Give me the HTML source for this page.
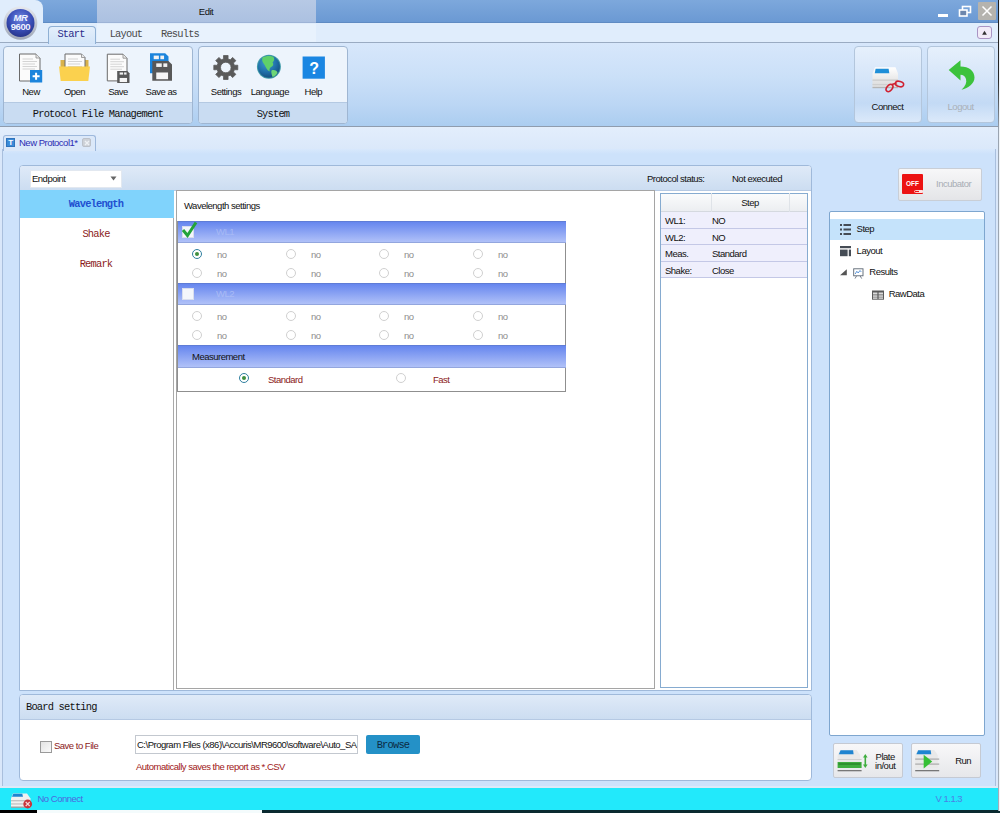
<!DOCTYPE html>
<html><head><meta charset="utf-8"><title>MR9600</title>
<style>
*{box-sizing:border-box;margin:0;padding:0}
html,body{width:1000px;height:813px;overflow:hidden;background:#d9e7fa}
body{position:relative;font-family:"Liberation Sans",sans-serif;font-size:9.5px;color:#111;letter-spacing:-0.5px}
.a{position:absolute}
.mono{font-family:"Liberation Mono",monospace;font-size:10.4px;letter-spacing:-0.8px}
.t{position:absolute;white-space:nowrap;line-height:12px;height:12px}
.c{transform:translateX(-50%)}
#title{left:0;top:0;width:1000px;height:23px;background:linear-gradient(#7da8dc,#6b99d3);border-bottom:1px solid #5f8bc3}
#titlemid{left:97px;top:0;width:219px;height:23px;background:linear-gradient(#b7c9e5,#acc1e1);border-bottom:1px solid #9db3d6}
#tabrow{left:0;top:23px;width:1000px;height:20px;background:#e0edfc;border-bottom:1px solid #9aabc2}
#appcorner{left:0;top:0;width:43px;height:42px;background:#e0edfc;border-top-right-radius:8px}
#ribbon{left:0;top:43px;width:1000px;height:83.5px;background:linear-gradient(#d7e7fb 0%,#cbe0f8 40%,#bbd6f4 75%,#abcdf0 100%);border-bottom:1px solid #8f9cae}
#below{left:0;top:126.5px;width:1000px;height:23px;background:linear-gradient(#e3eefc,#dae8fa)}
#doc{left:2px;top:148.5px;width:994px;height:638.5px;background:linear-gradient(#d8e8fc 0,#cde2fb 5px,#cde2fb 100%);border:1px solid #a9bfdd;border-top:none}
.grp{border:1px solid #9fb6d2;border-radius:4px;background:#edf4fc;overflow:hidden}
.grp .cap{position:absolute;left:0;right:0;bottom:0;height:21px;background:#c9dcf2;border-top:1px solid #b4c9e2;text-align:center;line-height:22px}
.bigbtn{border:1px solid #b3c6dc;border-radius:4px;background:linear-gradient(#e6f0fc 0%,#d2e3f8 50%,#c3daf5 75%,#dbe9fa 100%)}

.panel{border:1px solid #9fb9da;border-radius:4px 4px 0 0;background:#fff;overflow:hidden}
.phead{position:absolute;left:0;right:0;top:0;background:linear-gradient(#dfeaf8,#ccddf1);border-bottom:1px solid #b5c9e3}
.hdr{position:absolute;left:0;width:388px;background:linear-gradient(#6686ee,#b0c1f8);border-top:1px solid #5f7cd6;border-bottom:1px solid #93a6de}
.rad{position:absolute;width:10px;height:10px;border-radius:50%;border:1px solid #d0d0d0;background:#fff}
.rad.on{border-color:#2f7f9f}
.rad.on:after{content:"";position:absolute;left:2px;top:2px;width:4px;height:4px;border-radius:50%;background:#3f8f3f}
.no{color:#8e8e8e}
.grow{position:absolute;left:0;width:146px;height:17px;background:#efeffc;border-bottom:1px solid #c4c8e6}
</style></head><body>
<div class="a" id="title"></div>
<div class="a" id="titlemid"></div>
<div class="a" id="tabrow"></div>
<div class="a" id="appcorner"></div><div class="a" style="left:97px;top:24px;width:219px;height:18px;background:rgba(255,255,255,0.28)"></div>
<div class="a" id="ribbon"></div>
<div class="a" id="below"></div>
<div class="a" id="doc"></div>
<!-- title -->
<div class="t c" style="left:206px;top:6px;color:#111">Edit</div>
<!-- window controls -->
<div class="a" style="left:938.2px;top:14.4px;width:9.8px;height:2.3px;background:#fff"></div>
<svg class="a" style="left:958px;top:5px" width="14" height="13" viewBox="0 0 14 13"><rect x="4.5" y="1.5" width="8" height="6" fill="none" stroke="#fff" stroke-width="1.6"/><rect x="1.5" y="5" width="7.5" height="6" fill="#6d87ad" stroke="#fff" stroke-width="1.6"/></svg>
<div class="a" style="left:978px;top:2px;width:18px;height:18px;background:#b5b3ae;border-radius:1px"></div>
<svg class="a" style="left:978px;top:2px" width="18" height="18" viewBox="0 0 18 18"><path d="M4.5 4.5 L13.5 13.5 M13.5 4.5 L4.5 13.5" stroke="#fff" stroke-width="1.5" fill="none"/></svg>
<div class="a" style="left:977px;top:26px;width:15px;height:13px;border:1px solid #a994c4;border-radius:3px;background:#f1ebf8"></div>
<svg class="a" style="left:977px;top:26px" width="15" height="13"><path d="M7.5 4.8 L9.9 8.8 L5.1 8.8 Z" fill="#333"/></svg>
<!-- app button -->
<svg class="a" style="left:1px;top:3px" width="40" height="40" viewBox="0 0 40 40">
<defs><radialGradient id="g1" cx="50%" cy="35%" r="65%"><stop offset="0" stop-color="#6f86e0"/><stop offset="0.6" stop-color="#3a4fb8"/><stop offset="1" stop-color="#27358c"/></radialGradient>
<linearGradient id="g0" x1="0" y1="0" x2="0" y2="1"><stop offset="0" stop-color="#e6e9ef"/><stop offset="1" stop-color="#9ea6b6"/></linearGradient></defs>
<circle cx="19.5" cy="20" r="16.8" fill="url(#g0)"/><circle cx="19.5" cy="20" r="14" fill="url(#g1)"/>
<text x="19.5" y="17.5" text-anchor="middle" font-family="Liberation Sans, sans-serif" font-size="9.5" font-weight="bold" font-style="italic" fill="#eef2ff">MR</text>
<text x="19.5" y="27" text-anchor="middle" font-family="Liberation Sans, sans-serif" font-size="9.5" font-weight="bold" fill="#eef2ff" letter-spacing="-0.4">9600</text>
</svg>
<!-- ribbon tabs -->
<div class="a" style="left:48px;top:26px;width:48px;height:18px;border:1px solid #8fb0d4;border-bottom:none;border-radius:4px 4px 0 0;background:linear-gradient(#e4effb,#d2e4f8)"></div>
<div class="t mono c" style="left:71px;top:28px;color:#2a2a8a">Start</div>
<div class="t mono c" style="left:126px;top:28px;color:#4a4a4a">Layout</div>
<div class="t mono c" style="left:180px;top:28px;color:#4a4a4a">Results</div>
<!-- group 1 -->
<div class="a grp" style="left:3px;top:46px;width:190px;height:78px"><div class="cap mono">Protocol File Management</div></div>
<div class="a grp" style="left:198px;top:46px;width:150px;height:78px"><div class="cap mono">System</div></div>
<div class="t c" style="left:31px;top:85.7px">New</div>
<div class="t c" style="left:74.5px;top:85.7px">Open</div>
<div class="t c" style="left:118px;top:85.7px">Save</div>
<div class="t c" style="left:161px;top:85.7px">Save as</div>
<div class="t c" style="left:226px;top:85.7px">Settings</div>
<div class="t c" style="left:269.8px;top:85.7px">Language</div>
<div class="t c" style="left:313.3px;top:85.7px">Help</div>
<!-- icons placeholder -->
<svg class="a" style="left:0;top:44px" width="360" height="60" viewBox="0 44 360 60"><path d="M19.5 54 L36.0 54 L40.0 58 L40.0 81 L19.5 81 Z" fill="#fbfbfb" stroke="#6a6a6a" stroke-width="1"/><path d="M36.0 54 L36.0 58 L40.0 58" fill="#e9e9e9" stroke="#8a8a8a" stroke-width="0.8"/><rect x="22.5" y="58.5" width="10.5" height="1" fill="#d4d4d4"/><rect x="22.5" y="61" width="14.5" height="1" fill="#d4d4d4"/><rect x="22.5" y="63.5" width="12.5" height="1" fill="#d4d4d4"/><rect x="22.5" y="66" width="14.5" height="1" fill="#d4d4d4"/><rect x="22.5" y="68.5" width="12.5" height="1" fill="#d4d4d4"/><rect x="30" y="70" width="12.2" height="12.5" fill="#1b84dc"/><path d="M36.1 72.8 V79.8 M32.6 76.3 H39.6" stroke="#fff" stroke-width="2"/><path d="M60.5 60 H66 V67 H60.5 Z M84 60 H88.5 V67 H84 Z" fill="#d9b24a"/><path d="M65 54 L81.5 54 L85 57.5 L85 70 L65 70 Z" fill="#fbfbfb" stroke="#6a6a6a" stroke-width="1"/><path d="M81.5 54 L81.5 57.5 L85 57.5" fill="#e9e9e9" stroke="#8a8a8a" stroke-width="0.8"/><rect x="68" y="58.5" width="10" height="1" fill="#d4d4d4"/><rect x="68" y="61" width="14" height="1" fill="#d4d4d4"/><rect x="68" y="63.5" width="12" height="1" fill="#d4d4d4"/><rect x="68" y="66" width="14" height="1" fill="#d4d4d4"/><rect x="68" y="68.5" width="12" height="1" fill="#d4d4d4"/><path d="M59 66.5 H90 L88.3 81 H60.7 Z" fill="#fbd14e"/><path d="M107.3 54.2 L123.0 54.2 L127.0 58.2 L127.0 80.9 L107.3 80.9 Z" fill="#fbfbfb" stroke="#6a6a6a" stroke-width="1"/><path d="M123.0 54.2 L123.0 58.2 L127.0 58.2" fill="#e9e9e9" stroke="#8a8a8a" stroke-width="0.8"/><rect x="110.3" y="58.7" width="9.7" height="1" fill="#d4d4d4"/><rect x="110.3" y="61.2" width="13.7" height="1" fill="#d4d4d4"/><rect x="110.3" y="63.7" width="11.7" height="1" fill="#d4d4d4"/><rect x="110.3" y="66.2" width="13.7" height="1" fill="#d4d4d4"/><rect x="110.3" y="68.7" width="11.7" height="1" fill="#d4d4d4"/><path d="M117.2 71 L127.286 71 L129.5 73.214 L129.5 83 L117.2 83 Z" fill="#585858"/><rect x="119.66" y="72.44" width="3.4440000000000004" height="2.16" fill="#f2f2f2"/><rect x="124.08800000000001" y="72.44" width="2.4600000000000004" height="2.16" fill="#f2f2f2"/><rect x="119.66" y="77.96" width="7.38" height="4.08" fill="#f5f5f5"/><path d="M150 53.2 L165.17 53.2 L168.5 56.53 L168.5 73.2 L150 73.2 Z" fill="#1b84dc"/><rect x="153.7" y="55.6" width="5.180000000000001" height="3.5999999999999996" fill="#f2f2f2"/><rect x="160.36" y="55.6" width="3.7" height="3.5999999999999996" fill="#f2f2f2"/><rect x="153.7" y="64.8" width="11.1" height="6.800000000000001" fill="#f5f5f5"/><path d="M152.3 61 L168.454 61 L172.0 64.546 L172.0 80.8 L152.3 80.8 Z" fill="#585858"/><rect x="156.24" y="63.376" width="5.516" height="3.564" fill="#f2f2f2"/><rect x="163.33200000000002" y="63.376" width="3.94" height="3.564" fill="#f2f2f2"/><rect x="156.24" y="72.484" width="11.819999999999999" height="6.732000000000001" fill="#f5f5f5"/><path d="M223.60 58.88 L223.50 55.52 L228.10 55.52 L228.00 58.88 L230.34 59.85 L232.64 57.40 L235.90 60.66 L233.45 62.96 L234.42 65.30 L237.78 65.20 L237.78 69.80 L234.42 69.70 L233.45 72.04 L235.90 74.34 L232.64 77.60 L230.34 75.15 L228.00 76.12 L228.10 79.48 L223.50 79.48 L223.60 76.12 L221.26 75.15 L218.96 77.60 L215.70 74.34 L218.15 72.04 L217.18 69.70 L213.82 69.80 L213.82 65.20 L217.18 65.30 L218.15 62.96 L215.70 60.66 L218.96 57.40 L221.26 59.85 Z M220.5 67.5 a5.3 5.3 0 1 0 10.6 0 a5.3 5.3 0 1 0 -10.6 0 Z" fill="#5a5a5a" fill-rule="evenodd" stroke="#5a5a5a" stroke-width="0.8" stroke-linejoin="round"/><defs><radialGradient id="gl" cx="40%" cy="30%" r="75%"><stop offset="0" stop-color="#3f9fd0"/><stop offset="0.6" stop-color="#1f6fa8"/><stop offset="1" stop-color="#154a78"/></radialGradient></defs><circle cx="268.9" cy="66.8" r="12" fill="#3f9aa8"/><circle cx="268.9" cy="66.8" r="11" fill="url(#gl)"/><path d="M262.5 57.5 C266 55.5 271 55.5 273.5 57 C275 59 274 61 272.5 62.5 C274 64 273 66.5 271 67 C269.5 68 269 70 270 71.5 L268 70.5 C266 68 265 65.5 264 64 C262.5 62 261.5 60 262.5 57.5 Z" fill="#5fd06a"/><path d="M271.5 70.5 C274 69.5 277 70.5 277.5 72.5 C276.5 75 274.5 76.5 272.5 77 C272 75 270.8 72.5 271.5 70.5 Z" fill="#6ed676"/><rect x="302.6" y="56.5" width="22.3" height="22.2" fill="#1a86e2"/><text x="313.8" y="73.5" text-anchor="middle" font-family="Liberation Sans, sans-serif" font-weight="bold" font-size="16" fill="#fff">?</text></svg>
<!-- connect / logout -->
<div class="a bigbtn" style="left:854px;top:45.5px;width:68px;height:77.5px"></div>
<div class="a bigbtn" style="left:927.3px;top:45.5px;width:68px;height:77.5px"></div>
<div class="t c" style="left:887.5px;top:100.7px">Connect</div>
<div class="t c" style="left:960.6px;top:100.7px;color:#a9b0b8">Logout</div>
<svg class="a" style="left:860px;top:50px" width="130" height="50" viewBox="860 50 130 50"><defs><linearGradient id="dv" x1="0" y1="0" x2="0" y2="1"><stop offset="0" stop-color="#ffffff"/><stop offset="1" stop-color="#d8d8d8"/></linearGradient></defs><path d="M875 67.3 H895.5 L898 73.5 V88 H872.5 V73.5 Z" fill="url(#dv)"/><rect x="872.5" y="79.5" width="25.5" height="1.2" fill="#c9c9c9"/><rect x="872.5" y="84" width="25.5" height="1" fill="#cfcfcf"/><rect x="872.5" y="87" width="25.5" height="1.2" fill="#b5b5b5"/><path d="M875.6 68.8 H888.6 L889.3 73.3 H874.8 Z" fill="#1f8fd8"/><g fill="none" stroke="#d02030" stroke-width="1.6"><ellipse cx="889.5" cy="88" rx="4.2" ry="2.6" transform="rotate(-50 889.5 88)"/><ellipse cx="899.5" cy="84" rx="4.2" ry="2.6" transform="rotate(15 899.5 84)"/><path d="M892 84.5 L896.5 83"/></g><path d="M948.7 70 L960.5 60.2 L960.5 66.5 C969 66.5 974.5 71 974.5 77.5 C974.5 83.5 968.5 88 961.5 89.8 C965.5 86 967 82.5 966 79 C965 76 963 74.8 960.5 74.8 L960.5 80.5 Z" fill="#3cc23c"/></svg>
<!-- doc tab -->
<div class="a" style="left:3px;top:135px;width:93px;height:16px;border:1px solid #9db8dc;border-bottom:none;border-radius:3px 3px 0 0;background:#dbe8f9"></div>
<div class="a" style="left:6px;top:138px;width:9px;height:9px;background:#3b8bd8;border:1px solid #2f73bb"></div>
<div class="t" style="left:8.2px;top:136.5px;color:#fff;font-size:8px;font-weight:bold;letter-spacing:0">T</div>
<div class="t" style="left:19px;top:137px;color:#2d2db4">New Protocol1*</div>
<div class="a" style="left:82px;top:138px;width:9px;height:9px;background:#cdd1d7;border:1px solid #bcc1c9;border-radius:2px"></div>
<svg class="a" style="left:81.5px;top:137.5px" width="10" height="10"><path d="M3 3 L7 7 M7 3 L3 7" stroke="#eef1f5" stroke-width="1.4"/></svg>

<!-- main panel -->
<div class="a panel" style="left:19px;top:165px;width:793px;height:526px;background:#fff"><div class="phead" style="height:25px"></div></div>
<div class="a" style="left:30px;top:170px;width:92px;height:18px;background:#fff;border:1px solid #e2e8f0"></div>
<div class="t" style="left:32px;top:173px">Endpoint</div>
<svg class="a" style="left:110px;top:176px" width="7" height="5"><path d="M0.5 0.5 L6.5 0.5 L3.5 4.5 Z" fill="#666"/></svg>
<div class="t" style="left:647px;top:172.5px">Protocol status:</div>
<div class="t" style="left:732px;top:172.5px">Not executed</div>
<!-- left list -->
<div class="a" style="left:20px;top:190px;width:154px;height:500px;background:#fff;border-right:1px solid #a9a9a9"></div>
<div class="a" style="left:20px;top:190px;width:154px;height:28px;background:#80d3fc"></div>
<div class="t mono c" style="left:96px;top:198px;color:#1f4fd0;font-weight:bold">Wavelength</div>
<div class="t mono c" style="left:96px;top:227.5px;color:#8b1a1a">Shake</div>
<div class="t mono c" style="left:96px;top:257.5px;color:#8b1a1a">Remark</div>
<!-- center -->
<div class="a" style="left:176px;top:190px;width:479px;height:499px;background:#fff;border:1px solid #a5a5a5"></div>
<div class="t" style="left:184px;top:200px">Wavelength settings</div>
<div class="a" style="left:177px;top:220.5px;width:389px;height:171px;border:1px solid #8f8f8f;border-top:none;background:#fff">
 <div class="hdr" style="top:0;height:22px"></div>
 <div class="hdr" style="top:62px;height:22px"></div>
 <div class="hdr" style="top:124px;height:23px"></div>
</div>
<div class="t" style="left:216px;top:226px;color:#a6b9f5">WL1</div>
<div class="t" style="left:216px;top:288px;color:#a9bbf5">WL2</div>
<div class="t" style="left:192px;top:351px;color:#111">Measurement</div>
<!-- checkboxes -->
<div class="a" style="left:182px;top:226px;width:12px;height:12px;background:#f4f6fb;border:1px solid #d9deee"></div>
<svg class="a" style="left:181px;top:220px" width="18" height="18" viewBox="0 0 18 18"><path d="M2 10 L6.5 15.5 L15 2.5" fill="none" stroke="#22a33a" stroke-width="3"/></svg>
<div class="a" style="left:182px;top:288px;width:12px;height:12px;background:#f4f6fb;border:1px solid #d9deee"></div>
<div class="rad on" style="left:192px;top:249px"></div><div class="t no" style="left:217px;top:249.4px">no</div>
<div class="rad" style="left:286px;top:249px"></div><div class="t no" style="left:311px;top:249.4px">no</div>
<div class="rad" style="left:379px;top:249px"></div><div class="t no" style="left:404px;top:249.4px">no</div>
<div class="rad" style="left:473px;top:249px"></div><div class="t no" style="left:498px;top:249.4px">no</div>
<div class="rad" style="left:192px;top:268px"></div><div class="t no" style="left:217px;top:268.4px">no</div>
<div class="rad" style="left:286px;top:268px"></div><div class="t no" style="left:311px;top:268.4px">no</div>
<div class="rad" style="left:379px;top:268px"></div><div class="t no" style="left:404px;top:268.4px">no</div>
<div class="rad" style="left:473px;top:268px"></div><div class="t no" style="left:498px;top:268.4px">no</div>
<div class="rad" style="left:192px;top:311px"></div><div class="t no" style="left:217px;top:311.4px">no</div>
<div class="rad" style="left:286px;top:311px"></div><div class="t no" style="left:311px;top:311.4px">no</div>
<div class="rad" style="left:379px;top:311px"></div><div class="t no" style="left:404px;top:311.4px">no</div>
<div class="rad" style="left:473px;top:311px"></div><div class="t no" style="left:498px;top:311.4px">no</div>
<div class="rad" style="left:192px;top:330px"></div><div class="t no" style="left:217px;top:330.4px">no</div>
<div class="rad" style="left:286px;top:330px"></div><div class="t no" style="left:311px;top:330.4px">no</div>
<div class="rad" style="left:379px;top:330px"></div><div class="t no" style="left:404px;top:330.4px">no</div>
<div class="rad" style="left:473px;top:330px"></div><div class="t no" style="left:498px;top:330.4px">no</div>
<div class="rad on" style="left:239px;top:373px"></div><div class="t" style="left:268px;top:373.5px;color:#8b1a1a">Standard</div>
<div class="rad" style="left:396px;top:373px"></div><div class="t" style="left:433px;top:373.5px;color:#8b1a1a">Fast</div>

<!-- step grid -->
<div class="a" style="left:660px;top:192.5px;width:148px;height:495px;background:#fff;border:1px solid #86abd0"></div>
<div class="a" style="left:661px;top:193.5px;width:146px;height:18.5px;background:linear-gradient(#fafbfc,#eceef1);border-bottom:1px solid #d5d9df"></div>
<div class="a" style="left:711px;top:193px;width:1px;height:19px;background:#dfe3e8"></div>
<div class="a" style="left:789px;top:193px;width:1px;height:19px;background:#dfe3e8"></div>
<div class="t c" style="left:750px;top:197px">Step</div>
<div class="a" style="left:661px;top:212px;width:146px;height:67px">
 <div class="grow" style="top:0"></div><div class="grow" style="top:17px;height:16px"></div><div class="grow" style="top:33px;height:17px"></div><div class="grow" style="top:50px;height:16px"></div>
</div>
<div class="t" style="left:665px;top:215px">WL1:</div><div class="t" style="left:712px;top:215px">NO</div>
<div class="t" style="left:665px;top:231.5px">WL2:</div><div class="t" style="left:712px;top:231.5px">NO</div>
<div class="t" style="left:665px;top:248px">Meas.</div><div class="t" style="left:712px;top:248px">Standard</div>
<div class="t" style="left:665px;top:264.5px">Shake:</div><div class="t" style="left:712px;top:264.5px">Close</div>
<!-- board setting -->
<div class="a panel" style="left:19px;top:694px;width:793px;height:87px;border-radius:4px"><div class="phead" style="height:25px"></div></div>
<div class="t mono" style="left:26px;top:701px;color:#111">Board setting</div>
<div class="a" style="left:40px;top:741px;width:12px;height:12px;background:linear-gradient(135deg,#e3e3e3,#fafafa);border:1px solid #9a9a9a"></div>
<div class="t" style="left:54px;top:739.7px;color:#8b1a1a">Save to File</div>
<div class="a" style="left:135px;top:735px;width:223px;height:19px;background:#fff;border:1px solid #c3c8cf"></div>
<div class="t" style="left:137px;top:738.7px;letter-spacing:-0.5px;width:220px;overflow:hidden">C:\Program Files (x86)\Accuris\MR9600\software\Auto_SA</div>
<div class="a" style="left:366px;top:735px;width:54px;height:19px;background:#2491c7;border-radius:2px"></div>
<div class="t mono c" style="left:393px;top:738.5px;color:#0b2a44">Browse</div>
<div class="t" style="left:136px;top:760.7px;color:#a01818">Automatically saves the report as *.CSV</div>
<!-- right column -->
<div class="a" style="left:897.5px;top:168px;width:84px;height:32.5px;border:1px solid #c9ced6;border-radius:2px;background:linear-gradient(#f7f7f8,#e4e5e8)"></div>
<div class="a" style="left:902px;top:174px;width:21px;height:20px;background:#ec1212;border-radius:1px"></div>
<div class="t c" style="left:912.5px;top:178px;color:#fff;font-size:6.5px;font-weight:bold;letter-spacing:0">OFF</div>
<div class="a" style="left:913.5px;top:189.5px;width:9px;height:3.6px;border:0.8px solid #fbd0d0;border-radius:2px"></div><div class="a" style="left:918.5px;top:189.5px;width:4px;height:3.6px;background:#fde4e4;border-radius:1px"></div>
<div class="t" style="left:936px;top:178px;color:#a8adb5">Incubator</div>
<div class="a" style="left:828.5px;top:210.5px;width:156.5px;height:525px;background:#fff;border:1px solid #7ea6cf;border-radius:2px"></div>
<div class="a" style="left:830px;top:219px;width:154px;height:21px;background:#c5e3fb"></div>
<div class="t" style="left:856.6px;top:222.9px">Step</div>
<div class="t" style="left:856.6px;top:244.7px">Layout</div>
<div class="t" style="left:869.3px;top:266.3px">Results</div>
<div class="t" style="left:888.7px;top:288.1px">RawData</div>
<svg class="a" style="left:835px;top:215px" width="60" height="90" viewBox="835 215 60 90"><rect x="840" y="224" width="2" height="2" fill="#454c55"/><rect x="843.5" y="224" width="7.5" height="2" fill="#454c55"/><rect x="840" y="228.5" width="2" height="2" fill="#454c55"/><rect x="843.5" y="228.5" width="7.5" height="2" fill="#454c55"/><rect x="840" y="233" width="2" height="2" fill="#454c55"/><rect x="843.5" y="233" width="7.5" height="2" fill="#454c55"/><rect x="840" y="246" width="11" height="2.2" fill="#454c55"/><rect x="840" y="249.6" width="7.6" height="6.6" fill="#454c55"/><rect x="848.8" y="249.6" width="2.2" height="6.6" fill="#454c55"/><path d="M846.8 269.2 V275.3 H840 Z" fill="#555"/><rect x="853.7" y="268.8" width="9.3" height="7" fill="#fff" stroke="#5a6572" stroke-width="0.9"/><path d="M855.2 274 L856.8 271.3 L858.2 273 L860 270.5 L861.3 272" fill="none" stroke="#3a7fd0" stroke-width="0.8"/><path d="M856.5 276 L855 278.6 M860.2 276 L861.7 278.6" stroke="#5a6572" stroke-width="0.8"/><rect x="872" y="290.5" width="12" height="9.2" fill="#5b5b5b"/><rect x="873" y="292.5" width="4.4" height="2" fill="#dcdcdc"/><rect x="878.6" y="292.5" width="4.4" height="2" fill="#dcdcdc"/><rect x="873" y="295.3" width="4.4" height="1.5" fill="#dcdcdc"/><rect x="878.6" y="295.3" width="4.4" height="1.5" fill="#dcdcdc"/><rect x="873" y="297.4" width="4.4" height="1.4" fill="#dcdcdc"/><rect x="878.6" y="297.4" width="4.4" height="1.4" fill="#dcdcdc"/></svg>
<div class="a" style="left:833px;top:743px;width:70px;height:35px;border:1px solid #c5cad3;border-radius:2px;background:linear-gradient(#f8f8f9,#e6e7ea)"></div>
<div class="a" style="left:911px;top:743px;width:70px;height:35px;border:1px solid #c5cad3;border-radius:2px;background:linear-gradient(#f8f8f9,#e6e7ea)"></div>
<div class="t c" style="left:885.2px;top:750.8px">Plate</div>
<div class="t c" style="left:885.2px;top:760.4px">in/out</div>
<div class="t c" style="left:963.2px;top:755.1px">Run</div>
<svg class="a" style="left:835px;top:746px" width="110" height="30" viewBox="835 746 110 30"><path d="M840.1 750 H856.6 L860.1 755 V768 H837.6 V755 Z" fill="#e9e9e9"/><path d="M840.6 750.3 H853.1 L853.6 754.3 H838.8000000000001 Z" fill="#1f84d0"/><rect x="837.6" y="770" width="24" height="1.3" fill="#777"/><rect x="837.6" y="759" width="24" height="1" fill="#cfcfcf"/><rect x="837.6" y="762" width="24" height="6" fill="#3fae3f"/><rect x="838.5" y="763.2" width="22" height="1.6" fill="#2c8a2c"/><path d="M865.3 754 L867.6 757.5 H866.1 V764.5 H867.6 L865.3 768 L863 764.5 H864.5 V757.5 H863 Z" fill="#3fae3f"/><path d="M917.7 750 H934.2 L937.7 755 V768 H915.2 V755 Z" fill="#e9e9e9"/><path d="M918.2 750.3 H930.7 L931.2 754.3 H916.4000000000001 Z" fill="#1f84d0"/><rect x="915.2" y="770" width="24" height="1.3" fill="#777"/><rect x="915.2" y="758.5" width="24" height="1.2" fill="#aaa"/><rect x="915.2" y="763.5" width="24" height="1.2" fill="#aaa"/><path d="M923.7 754.8 L932.2 761.6 L923.7 768.4 Z" fill="#35c035"/></svg>
<!-- status bar -->
<div class="a" style="left:0;top:786px;width:1000px;height:2px;background:#dce9f8"></div>
<div class="a" style="left:0;top:788px;width:1000px;height:22.5px;background:#22e9fb"></div>
<div class="t" style="left:37.5px;top:793.2px;color:#4c68de">No Connect</div>
<div class="t" style="left:935.5px;top:793.2px;color:#4a80e6">V 1.1.3</div>
<div class="a" style="left:0;top:810.4px;width:1000px;height:2.6px;background:#0a2a30"></div>
<div class="a" style="left:0;top:810.4px;width:37px;height:2.6px;background:#000"></div>
<div class="a" style="left:37px;top:810.4px;width:225px;height:2.6px;background:#f4fbfc"></div>
<svg class="a" style="left:8px;top:790px" width="28" height="20" viewBox="8 790 28 20"><path d="M13 793.5 H27 L30.5 798.5 V807.5 H11 V798.5 Z" fill="#f1f1f1"/><path d="M13.3 793.8 H22.3 L23 796.8 H12 Z" fill="#1f84d0"/><rect x="11" y="800.2" width="19.5" height="1.1" fill="#b9b9b9"/><rect x="11" y="803.4" width="19.5" height="1.1" fill="#b9b9b9"/><rect x="11" y="806.6" width="19.5" height="1.1" fill="#8d8d8d"/><circle cx="27.7" cy="804" r="4.4" fill="#c8343a"/><path d="M25.7 802 L29.7 806 M29.7 802 L25.7 806" stroke="#f4d6d6" stroke-width="1.2"/></svg>
<div class="a" style="left:998px;top:0;width:1.2px;height:811px;background:linear-gradient(#1c1c1c 0,#2a2a2a 80px,#9aa4b0 130px,#a4adb8 100%)"></div><div class="a" style="left:999.2px;top:0;width:0.8px;height:811px;background:#eef3f8"></div>


</body></html>
